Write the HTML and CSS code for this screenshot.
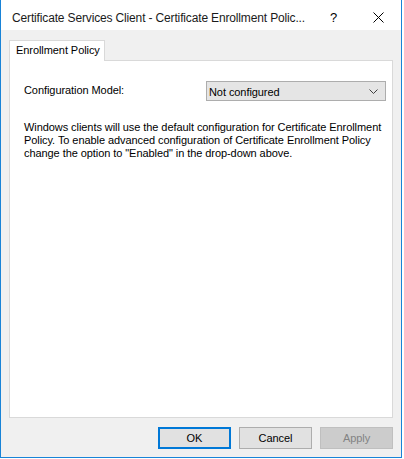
FILE: index.html
```html
<!DOCTYPE html>
<html>
<head>
<meta charset="utf-8">
<link rel="stylesheet" href="styles.css">
</head>
<body>
<div class="window">
  <div class="titlebar">
    <span class="title">Certificate Services Client - Certificate Enrollment Polic...</span>
    <span class="help">?</span>
    <span class="close">
      <svg width="11" height="11" viewBox="0 0 11 11"><path d="M0.5 0.5 L10.5 10.5 M10.5 0.5 L0.5 10.5" stroke="#000" stroke-width="1" fill="none"/></svg>
    </span>
  </div>
  <div class="client">
    <div class="tabs">
      <div class="tab">Enrollment Policy</div>
    </div>
    <div class="panel">
      <div class="row">
        <span class="label">Configuration Model:</span>
        <div class="select">
          <span>Not configured</span>
          <svg width="9" height="5" viewBox="0 0 9 5"><path d="M0.5 0.5 L4.5 4.5 L8.5 0.5" stroke="#404040" stroke-width="1" fill="none"/></svg>
        </div>
      </div>
      <p class="desc">Windows clients will use the default configuration for Certificate Enrollment<br>Policy. To enable advanced configuration of Certificate Enrollment Policy<br>change the option to "Enabled" in the drop-down above.</p>
    </div>
    <div class="buttons">
      <button class="btn default">OK</button>
      <button class="btn">Cancel</button>
      <button class="btn disabled">Apply</button>
    </div>
  </div>
</div>
</body>
</html>
```
FILE: styles.css
```css
html, body {
  margin: 0;
  padding: 0;
  background: #ffffff;
}
body {
  font-family: "Liberation Sans", Arial, sans-serif;
  font-size: 11px;
  letter-spacing: -0.07px;
  color: #000;
}
.window {
  width: 400px;
  height: 457px;
  border-left: 1px solid #1883d7;
  border-right: 1px solid #1883d7;
  border-bottom: 1px solid #1883d7;
  display: flex;
  flex-direction: column;
  background: #f0f0f0;
}
.titlebar {
  height: 30px;
  background: #ffffff;
  display: flex;
  align-items: center;
  padding-top: 5px;
  box-sizing: border-box;
}
.title {
  margin-left: 11px;
  width: 318px;
  white-space: nowrap;
  font-size: 12px;
  letter-spacing: -0.15px;
  color: #1a1a1a;
}
.help {
  width: 10px;
  font-size: 13px;
  letter-spacing: 0;
}
.close {
  margin-left: 33px;
  display: flex;
}
.client {
  flex: 1;
  padding: 10px 8px 0 8px;
  display: flex;
  flex-direction: column;
}
.tabs {
  display: flex;
  height: 20px;
  position: relative;
  z-index: 1;
}
.tab {
  width: 96px;
  box-sizing: border-box;
  height: 21px;
  background: #ffffff;
  border: 1px solid #d9d9d9;
  border-bottom: none;
  padding: 3px 0 0 6px;
  white-space: nowrap;
}
.panel {
  height: 358px;
  box-sizing: border-box;
  background: #ffffff;
  border: 1px solid #d9d9d9;
  padding: 20px 6px 0 14px;
}
.row {
  display: flex;
  align-items: center;
  justify-content: space-between;
}
.label {
  margin-top: -2px;
}
.select {
  width: 180px;
  height: 20px;
  box-sizing: border-box;
  background: #e5e5e5;
  border: 1px solid #adadad;
  display: flex;
  align-items: center;
  justify-content: space-between;
  padding: 1px 7px 0 2px;
}
.desc {
  margin: 20px 0 0 0;
  line-height: 13px;
  white-space: nowrap;
}
.buttons {
  display: flex;
  justify-content: flex-end;
  gap: 8px;
  margin-top: 9px;
}
.btn {
  width: 73px;
  height: 22px;
  box-sizing: border-box;
  background: #e1e1e1;
  border: 1px solid #adadad;
  font-family: inherit;
  font-size: 11px;
  letter-spacing: -0.07px;
  color: #000;
  padding: 0;
  margin: 0;
}
.btn.default {
  border: 2px solid #0078d7;
}
.btn.disabled {
  background: #cccccc;
  border-color: #bfbfbf;
  color: #838383;
}
```
